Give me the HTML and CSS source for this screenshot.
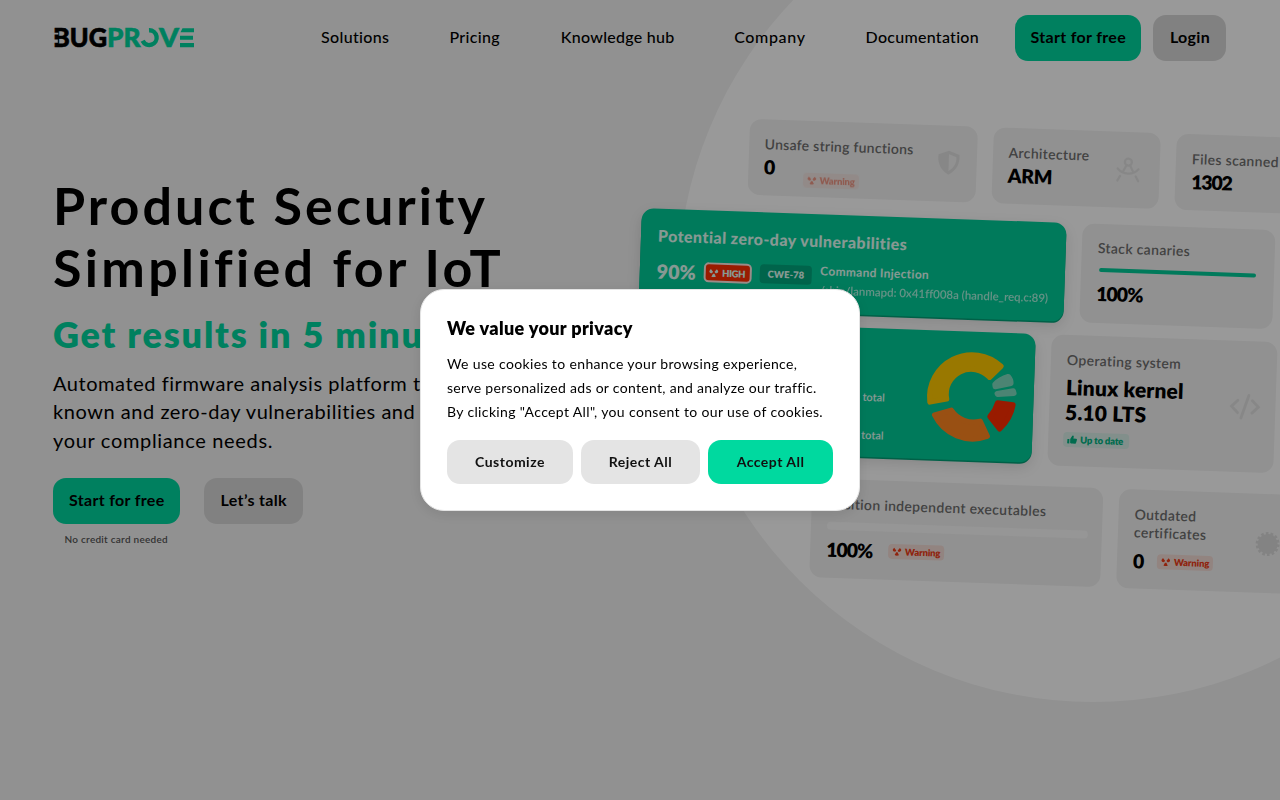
FILE: index.html
```html
<!DOCTYPE html>
<html lang="en">
<head>
<meta charset="utf-8">
<title>BugProve</title>
<link rel="stylesheet" href="styles.css">
</head>
<body>
<svg class="symbols" aria-hidden="true">
  <symbol id="radiation" viewBox="0 0 20 18">
    <path d="M1 5 4 1l4.500 5.500-2 3C3 9.500 1 8 1 5zM19 5 16 1l-4.500 5.500 2 3C17 9.500 19 8 19 5zM8.500 10.500h3l3 6c-3 1.500-6 1.500-9 0z"/>
  </symbol>
  <symbol id="thumb" viewBox="0 0 18 16">
    <path d="M0 7h4v8H0zM5.500 7 9 1c1.500-1 3 0 2.700 2L11 6h5c2 0 2 2 1 2.700 1 1 .5 2-.4 2.400.5 1 0 1.800-.7 2.100.2 1-.6 1.800-1.600 1.800H9c-1.500 0-2.500-.6-3.500-1.500z"/>
  </symbol>
</svg>

<div class="page">
  <header class="header">
    <svg class="logo" viewBox="0 0 142 32" role="img" aria-label="BugProve">
      <text class="logo-dark" x="0" y="25" textLength="54" lengthAdjust="spacingAndGlyphs">BUG</text>
      <text class="logo-green" x="54" y="25" textLength="33.500" lengthAdjust="spacingAndGlyphs">PR</text>
      <path class="logo-ring" d="M89.600 18.800A7.400 7.400 0 1 0 96 8.200"/>
      <text class="logo-green" x="106" y="25" textLength="20" lengthAdjust="spacingAndGlyphs">V</text>
      <path class="logo-bars" d="M129.500 6.300H141v4h-13.500zM127 13.700h13v4.100h-13zM127 21h14v4.200h-14z"/>
      <path class="logo-cut" d="M0 10.800h5.300v1.800H0zM0 17.500h4.800v3.200H0z"/>
    </svg>
    <nav class="nav">
      <a>Solutions</a><a>Pricing</a><a class="tight">Knowledge hub</a><a class="wide">Company</a><a class="tight">Documentation</a>
    </nav>
    <div class="header-actions">
      <a class="btn btn-primary w-126">Start for free</a>
      <a class="btn btn-muted w-73">Login</a>
    </div>
  </header>

  <main class="hero">
    <section class="pitch">
      <h1>Product Security<br><span class="h1-second">Simplified for IoT</span></h1>
      <h2>Get results in 5 minutes</h2>
      <p class="lead">Automated firmware analysis platform to find<br>known and zero-day vulnerabilities and support<br><span class="lead-last">your compliance needs.</span></p>
      <div class="cta">
        <div class="cta-item">
          <a class="btn btn-primary w-126">Start for free</a>
          <small>No credit card needed</small>
        </div>
        <a class="btn btn-muted w-100">Let’s talk</a>
      </div>
    </section>
  </main>

  <div class="circle"></div>
  <div class="board">
    <div class="row row-1">
      <div class="card c-unsafe">
        <div class="label sp27">Unsafe string functions</div>
        <div class="line"><b class="num">0</b><span class="tag warn faded"><svg><use href="#radiation"/></svg>Warning</span></div>
        <svg class="icon i-shield" viewBox="0 0 24 26"><path fill-rule="evenodd" d="M12 1 22.500 5C23.500 13 20 21 12 25 4 21 .5 13 1.500 5zM12 4.500v16.800C17.500 18 20 13 19.500 7.300z"/></svg>
      </div>
      <div class="card c-arch">
        <div class="label">Architecture</div>
        <b class="num arm">ARM</b>
        <svg class="icon i-arch line-icon" viewBox="0 0 24 26"><circle cx="12" cy="5" r="3.400"/><path d="M10.300 8 7.500 13.500M4.500 18.500 2 23M13.700 8l2.800 5.500M19.500 18.500 22 23M2 11.500c5 6 15 6 20 0"/></svg>
      </div>
      <div class="card c-files">
        <div class="label">Files scanned</div>
        <b class="num n1302">1302</b>
      </div>
    </div>

    <div class="row row-2">
      <div class="card green c-zero">
        <div class="title">Potential zero-day vulnerabilities</div>
        <div class="finding">
          <b class="pct">90%</b>
          <span class="tag high"><svg><use href="#radiation"/></svg>HIGH</span>
          <span class="tag cwe">CWE-78</span>
          <div class="detail"><b>Command Injection</b><span>/sbin/lanmapd: 0x41ff008a (handle_req.c:89)</span></div>
        </div>
      </div>
      <div class="card c-stack">
        <div class="label">Stack canaries</div>
        <div class="bar bar-green"></div>
        <b class="num hundred">100%</b>
      </div>
    </div>

    <div class="row row-3">
      <div class="card green c-known">
        <div class="totals"><span>total</span><span>total</span></div>
        <svg class="donut" viewBox="215 80 300 300">
          <path fill="#ffc800" stroke="#ffc800" d="M240 246A127 127 0 0 1 453 139L419 172A75 75 0 0 0 290 237Z"/>
          <path fill="#ff8521" stroke="#ff8521" d="M254 285A127 127 0 0 0 412 349L391 304A80 80 0 0 1 304 271Z"/>
          <path fill="#ff2d00" stroke="#ff2d00" d="M443 249 489 255Q482 295 449 327L420 290Q436 272 443 249Z"/>
          <path fill="#7fdcc0" stroke="#7fdcc0" d="M435 193Q450 178 475 170 483 179 483 190L436 200Z"/>
          <path fill="#7fdcc0" stroke="#7fdcc0" d="M442 221 490 213 492 220 443 223Z"/>
        </svg>
      </div>
      <div class="card c-os">
        <div class="label sp35">Operating system</div>
        <b class="os">Linux kernel<br>5.10 LTS</b>
        <span class="tag ok"><svg><use href="#thumb"/></svg>Up to date</span>
        <svg class="icon i-code line-icon" viewBox="0 0 30 26"><path d="M8 7 2 13l6 6M22 7l6 6-6 6M18.500 2l-7 22"/></svg>
      </div>
    </div>

    <div class="row row-4">
      <div class="card c-pie">
        <div class="label">Position independent executables</div>
        <div class="bar bar-light"></div>
        <div class="line"><b class="num hundred">100%</b><span class="tag warn"><svg><use href="#radiation"/></svg>Warning</span></div>
      </div>
      <div class="card c-cert">
        <div class="label">Outdated<br>certificates</div>
        <div class="line"><b class="num">0</b><span class="tag warn"><svg><use href="#radiation"/></svg>Warning</span></div>
        <svg class="icon i-cert" viewBox="0 0 26 26"><circle cx="13" cy="13" r="10"/><circle class="teeth" cx="13" cy="13" r="10.500"/></svg>
      </div>
    </div>
  </div>
</div>

<div class="overlay">
  <div class="modal" role="dialog">
    <h3>We value your privacy</h3>
    <p>We use cookies to enhance your browsing experience,<br><span class="traffic">serve personalized ads or content, and analyze our traffic.</span><br>By clicking "Accept All", you consent to our use of cookies.</p>
    <div class="choices">
      <button>Customize</button><button>Reject All</button><button class="accept">Accept All</button>
    </div>
  </div>
</div>
</body>
</html>
```
FILE: styles.css
```css
* { box-sizing: border-box; }
body { margin: 0; font-family: Lato, "Liberation Sans", sans-serif; color: #000; }
h1, h2, h3, p { margin: 0; }
.symbols { position: absolute; width: 0; height: 0; }
.page { position: relative; width: 1280px; height: 800px; overflow: hidden; background: #f2f2f2; }

/* header */
.header { position: relative; z-index: 3; height: 75px; display: flex; align-items: center; padding: 0 54px 0 53px; }
.logo { width: 142px; height: 32px; overflow: visible; }
.logo text { font: 900 26px Lato, sans-serif; stroke-width: .6; }
.logo-dark { fill: #000; stroke: #000; }
.logo-green, .logo-bars { fill: #00d69e; }
.logo-green { stroke: #00d69e; }
.logo-ring { fill: none; stroke: #00d69e; stroke-width: 4.400; }
.logo-cut { fill: #f2f2f2; }
.nav { margin-left: 126px; padding-bottom: 2px; display: grid; grid-template-columns: 68px 51px 113px 71px 113px; column-gap: 60.400px; font-size: 16px; font-weight: 500; letter-spacing: .35px; white-space: nowrap; }
.nav .tight { letter-spacing: .28px; }
.nav .wide { letter-spacing: .65px; }
.header-actions { margin-left: auto; display: flex; gap: 12px; }
.btn { height: 46px; padding: 0 0 2px 1px; border-radius: 13px; display: flex; align-items: center; justify-content: center; font-size: 16px; font-weight: 700; letter-spacing: .33px; white-space: nowrap; }
.btn-primary { background: #00d69e; }
.btn-muted { background: #d8d8d8; }
.w-126 { width: 126.500px; }
.w-73 { width: 73px; }
.w-100 { width: 99.500px; }

/* pitch */
.hero { padding: 100px 53px 0; position: relative; z-index: 1; }
h1 { font-size: 52px; line-height: 62px; font-weight: 700; letter-spacing: 3.050px; margin-top: -1px; }
.h1-second { letter-spacing: 3.350px; }
h2 { margin-top: 14px; font-size: 36px; line-height: 44px; font-weight: 800; letter-spacing: 1.800px; color: #00d69e; }
.lead { margin-top: 12.500px; font-size: 20px; line-height: 28.500px; letter-spacing: .55px; white-space: nowrap; }
.lead-last { letter-spacing: .67px; }
.cta { margin-top: 23.500px; display: flex; align-items: flex-start; gap: 24px; }
.cta-item { display: flex; flex-direction: column; align-items: center; }
.cta small { margin-top: 9px; font-size: 10px; line-height: 13px; font-weight: 600; letter-spacing: .26px; color: #555; }

/* illustration */
.circle { position: absolute; left: 678px; top: -128px; width: 830px; height: 830px; border-radius: 50%; background: #fff; }
.board { position: absolute; z-index: 2; left: 641.500px; top: 114.700px; width: 760px; transform: rotate(2deg); transform-origin: 0 92.500px; }
.row { display: flex; gap: 16px; }
.row-1 { padding-left: 104.500px; height: 75.500px; }
.row-2 { margin-top: 17px; height: 99px; }
.row-3 { margin-top: 13.500px; height: 131px; }
.row-4 { margin-top: 21px; padding-left: 180px; height: 98.500px; }
.card { position: relative; flex: none; border-radius: 12px; background: #f2f2f2; padding: 15.500px 16px 0; }
.label { font-size: 14px; line-height: 18px; font-weight: 600; letter-spacing: .32px; color: #6e6e6e; white-space: nowrap; }
.sp27 { letter-spacing: .25px; }
.line { display: flex; align-items: center; }
.num { display: block; font-size: 19.500px; line-height: 27px; font-weight: 800; white-space: nowrap; }
.hundred { letter-spacing: -1px; }
.arm { letter-spacing: -.4px; }
.n1302 { letter-spacing: -1.200px; }
.c-unsafe { width: 228px; }
.c-arch { width: 167.500px; }
.c-files { width: 170px; }
.c-zero { width: 425px; padding-left: 17px; }
.c-stack { width: 193px; }
.c-known { width: 398px; height: 129px; }
.c-os { width: 226px; }
.c-pie { width: 291px; }
.c-cert { width: 220px; }
.green { background: #00cc98; color: #e2fff6; box-shadow: 0 1.500px 0 #00a077, 0 5px 14px rgba(0, 0, 0, .12); }
.tag { display: inline-flex; align-items: center; height: 15px; padding: 0 4px; gap: 3px; border-radius: 4px; font-size: 9.500px; font-weight: 800; white-space: nowrap; }
.tag svg { width: 10px; height: 9px; fill: currentColor; }
.warn { width: 56px; color: #ee3c18; background: #f4dcd6; letter-spacing: -.15px; }
.c-unsafe .line { height: 27px; align-items: flex-start; }
.c-unsafe .faded { opacity: .5; filter: blur(.5px); margin: 18px 0 0 28px; }
.ok { color: #00b383; background: #d9efe8; width: 66px; letter-spacing: -.2px; }

.title { margin-top: 3px; font-size: 16px; line-height: 18px; font-weight: 900; letter-spacing: .43px; }
.finding { display: flex; margin-top: 13px; align-items: flex-start; }
.pct { width: 48px; font-size: 19.500px; line-height: 27px; font-weight: 800; letter-spacing: .1px; }
.high { margin-top: 3px; width: 48px; height: 20px; background: #ff2d00; border: 2px solid #ffe9e4; border-radius: 5px; padding: 0 3px; letter-spacing: -.4px; }
.cwe { margin: 3px 0 0 8px; width: 53px; height: 19px; justify-content: center; background: #00a77d; }
.detail { margin: -1px 0 0 8px; display: flex; flex-direction: column; white-space: nowrap; font-size: 12px; line-height: 18px; letter-spacing: .28px; }
.detail span { margin-top: 1px; font-size: 11.500px; font-weight: 600; letter-spacing: -.02px; opacity: .75; }

.bar { border-radius: 4px; }
.bar-green { width: 157px; height: 4px; margin: 11px 0 0 2px; background: #00cc98; }
.c-stack .num { margin-top: 8px; }
.bar-light { width: 261px; height: 8px; margin-top: 9px; background: #fafafa; }
.c-pie .line { margin-top: 6px; }
.c-pie .warn { margin-left: 16px; }
.c-cert .line { margin-top: 6px; }
.c-cert .warn { margin-left: 13px; }

.c-known { padding: 8px 8px 0 227px; display: flex; }
.totals { flex: none; padding-top: 52px; width: 59px; display: flex; flex-direction: column; gap: 20px; font-size: 11px; line-height: 18px; font-weight: 600; letter-spacing: 0; }
.donut { flex: none; width: 100px; height: 100px; margin: 6.500px 0 0; transform: rotate(-2deg); }
.donut path { stroke-width: 16; stroke-linejoin: round; }
.os { display: block; margin-top: 5px; font-size: 21px; line-height: 25px; font-weight: 800; letter-spacing: .13px; white-space: nowrap; }
.c-os .ok { position: relative; top: 4.500px; left: -1px; }

.icon { position: absolute; fill: #e2e2e2; }
.line-icon { fill: none; stroke: #e2e2e2; stroke-width: 2.200; stroke-linecap: round; }
.i-shield { right: 16px; top: 24px; width: 24px; height: 26px; }
.i-arch { right: 19px; top: 25px; width: 25px; height: 27px; }
.i-code { right: 15px; top: 51.500px; width: 31px; height: 27px; stroke-width: 2.800; }
.i-cert { left: 137px; top: 37px; width: 26px; height: 26px; fill: #dadada; }
.teeth { fill: none; stroke: #dadada; stroke-width: 3; stroke-dasharray: 2.600 2.100; }

/* consent dialog */
.overlay { position: fixed; inset: 0; z-index: 10; background: rgba(0, 0, 0, .4); display: flex; align-items: center; justify-content: center; }
.modal { width: 440px; height: 222px; border-radius: 24px; border: 1px solid #e4e4e4; background: #fff; padding: 26px; box-shadow: 0 3px 14px rgba(0, 0, 0, .1); }
.modal h3 { font-size: 18px; line-height: 24px; font-weight: 800; letter-spacing: .35px; }
.modal p { margin-top: 12px; font-size: 14px; line-height: 24px; letter-spacing: .36px; white-space: nowrap; }
.modal .traffic { letter-spacing: .3px; }
.choices { margin-top: 16px; display: grid; grid-template-columns: 126px 119px 125px; gap: 8px; }
.choices button { height: 44px; border: 0; border-radius: 13px; background: #e4e4e4; font: 700 14px Lato, sans-serif; letter-spacing: .48px; color: #111; padding: 0 0 1px; }
.choices .accept { background: #00d99f; }
```
